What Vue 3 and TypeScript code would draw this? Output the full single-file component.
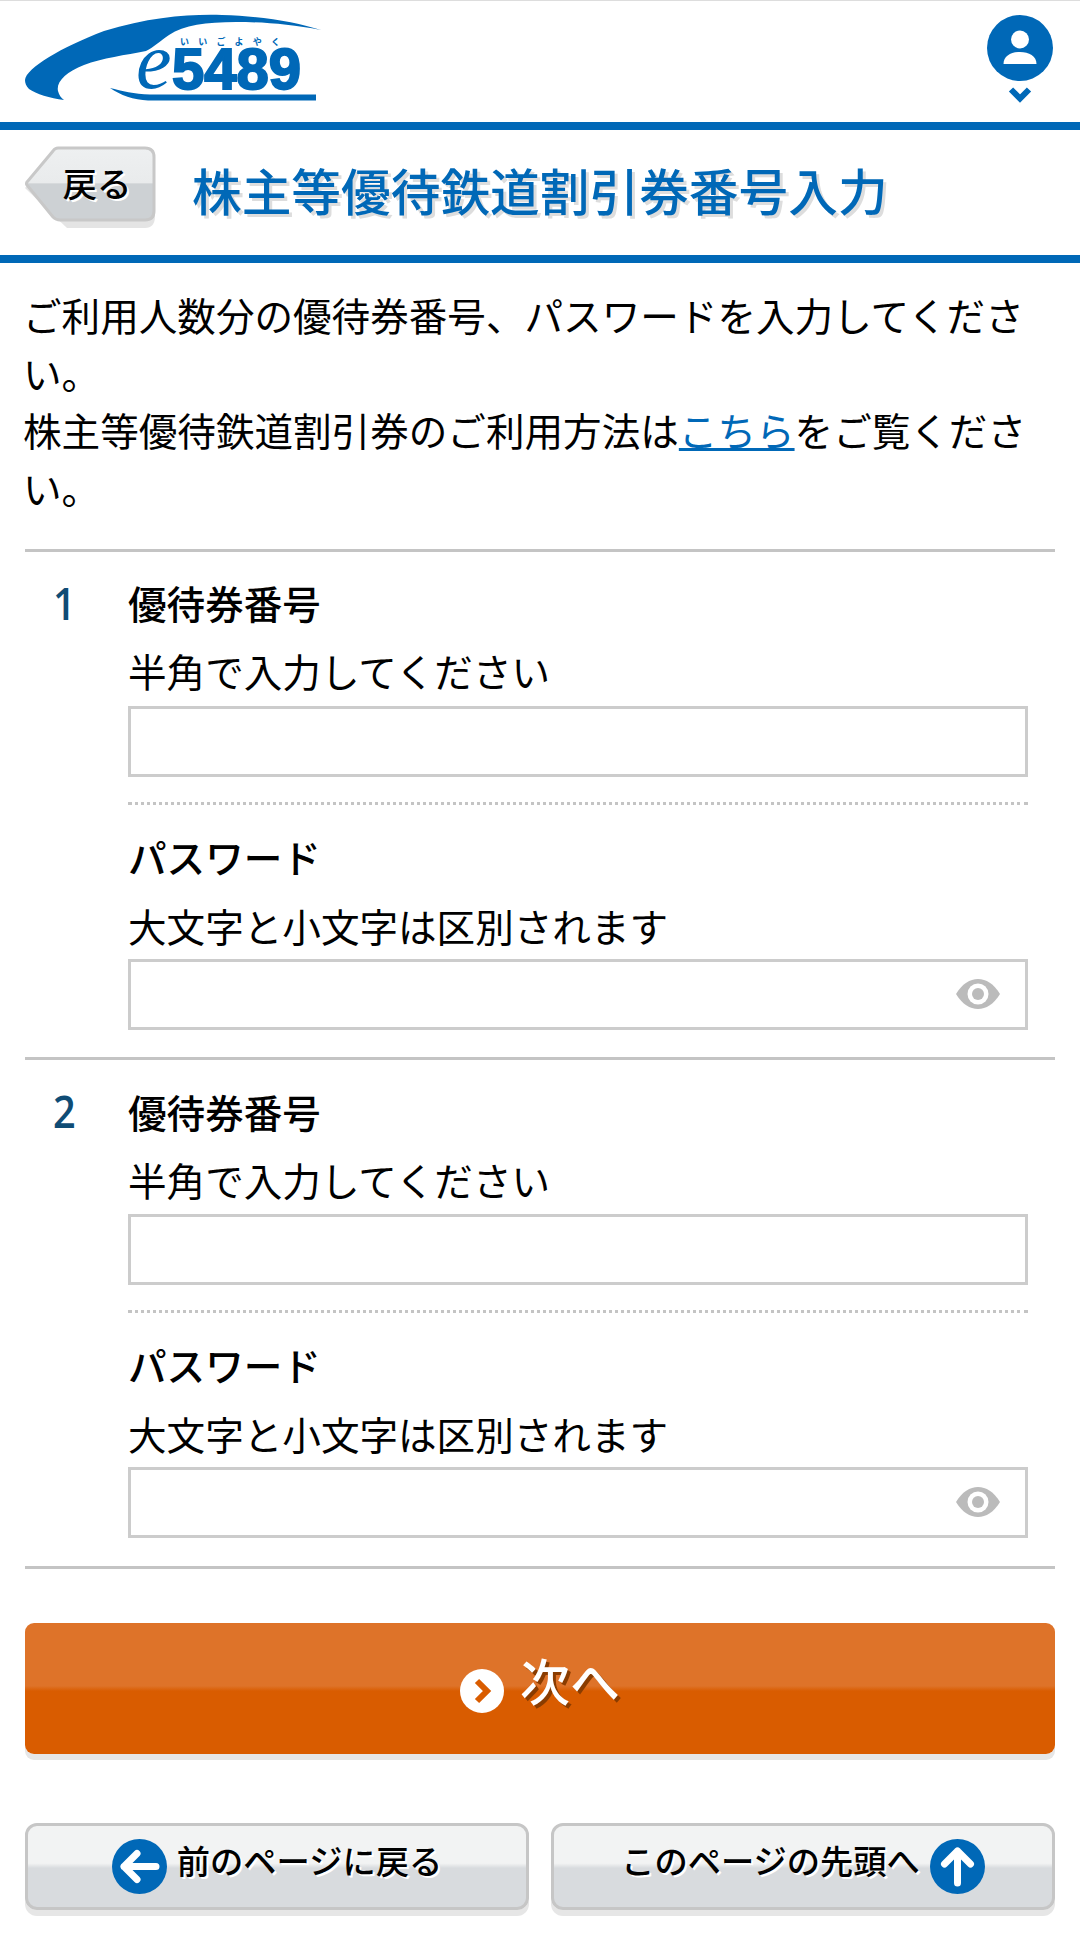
<script setup lang="ts">
interface Entry { no: number }
const entries: Entry[] = [{ no: 1 }, { no: 2 }]
</script>

<template>
  <div class="page">
    <header class="head">
      <svg class="logo" viewBox="25 12 300 92" width="300" height="92" aria-label="e5489">
        <path fill="#0068b7" d="M25 80C26 68 62 47 104 31C150 17 190 14 222 15C262 16 296 22 321 30C290 24 262 22 236 22C206 22 184 25 169 35C160 41 154 47 146 51C126 55 102 58 84 65C66 72 56 82 58 91C59 95 61 98 64 100C50 98 36 94 29 89C26 86 25 83 25 80Z" />
        <path fill="#0068b7" d="M110 88C122 91 134 94 150 94.5L316 94.5L316 100.5L148 100.5C134 100 120 95 110 88Z" />
        <text x="136" y="88" class="logo-e">e</text>
        <text x="172" y="89" class="logo-num">5489</text>
        <text x="180" y="45" class="logo-kana">いいごよやく</text>
      </svg>
      <div class="user">
        <svg viewBox="0 0 66 90" width="66" height="90">
          <circle cx="33" cy="33" r="33" fill="#0068b7" />
          <circle cx="33" cy="24.5" r="9" fill="#fff" />
          <path d="M16.5 49C16.5 41 24 37 33 37C42 37 49.5 41 49.5 49Z" fill="#fff" />
          <path d="M24 74.5L33 83.5L42 74.5" fill="none" stroke="#0068b7" stroke-width="6" />
        </svg>
      </div>
    </header>

    <div class="title-bar">
      <a class="back">
        <svg class="back-bg" viewBox="0 0 131 82" width="131" height="82">
          <defs>
            <linearGradient id="bk" x1="0" y1="0" x2="0" y2="1">
              <stop offset="0" stop-color="#eef0f1" />
              <stop offset="0.48" stop-color="#e9ebec" />
              <stop offset="0.5" stop-color="#cdd1d4" />
              <stop offset="1" stop-color="#cdd1d4" />
            </linearGradient>
          </defs>
          <path d="M32 6L120 6Q130 6 130 16L130 70Q130 82 120 82L42 82L0 42Z" fill="#e4e4e4" />
          <path d="M33 2L120 2Q129 2 129 11L129 65Q129 74 120 74L35 74Q31 74 28 71L2 39Q1 38 2 36L28 5Q30 2 33 2Z" fill="url(#bk)" stroke="#c8c8c8" stroke-width="3" />
        </svg>
        <span class="back-text">戻る</span>
      </a>
      <h1 class="title">株主等優待鉄道割引券番号入力</h1>
    </div>

    <main class="main">
      <p class="lead">
        ご利用人数分の優待券番号、パスワードを入力してください。<br />
        株主等優待鉄道割引券のご利用方法は<a class="link">こちら</a>をご覧ください。
      </p>

      <section v-for="e in entries" :key="e.no" class="entry">
        <div class="no">{{ e.no }}</div>
        <div class="fields">
          <div class="field field-top">
            <div class="label">優待券番号</div>
            <div class="hint">半角で入力してください</div>
            <input class="input" type="text" />
          </div>
          <div class="field field-bottom">
            <div class="label">パスワード</div>
            <div class="hint">大文字と小文字は区別されます</div>
            <div class="pw">
              <input class="input" type="password" />
              <svg class="eye" viewBox="0 0 44 30" width="44" height="30">
                <path fill="#bbb" d="M0 15C6 5 14 0 22 0C30 0 38 5 44 15C38 25 30 30 22 30C14 30 6 25 0 15Z" />
                <circle cx="22" cy="15" r="10.5" fill="#fff" />
                <circle cx="22" cy="15" r="6" fill="#bbb" />
              </svg>
            </div>
          </div>
        </div>
      </section>

      <button class="next" type="button">
        <svg viewBox="0 0 44 44" width="44" height="44">
          <circle cx="22" cy="22" r="22" fill="#fff" />
          <path d="M17 12L27 22L17 32" fill="none" stroke="#d95c00" stroke-width="6" />
        </svg>
        <span>次へ</span>
      </button>

      <div class="nav">
        <button class="nav-btn" type="button">
          <svg viewBox="0 0 55 55" width="55" height="55">
            <circle cx="27.5" cy="27.5" r="27.5" fill="#0068b7" />
            <path d="M44 27.5H12M25 14.5L12 27.5L25 40.5" fill="none" stroke="#fff" stroke-width="7" stroke-linecap="round" stroke-linejoin="round" />
          </svg>
          <span>前のページに戻る</span>
        </button>
        <button class="nav-btn" type="button">
          <span>このページの先頭へ</span>
          <svg viewBox="0 0 55 55" width="55" height="55">
            <circle cx="27.5" cy="27.5" r="27.5" fill="#0068b7" />
            <path d="M27.5 44V12M14.5 25L27.5 12L40.5 25" fill="none" stroke="#fff" stroke-width="7" stroke-linecap="round" stroke-linejoin="round" />
          </svg>
        </button>
      </div>
    </main>
  </div>
</template>

<style scoped>
.page {
  width: 1080px;
  min-height: 1947px;
  background: #fff;
  color: #000;
  font-family: "Noto Sans CJK JP", "Noto Sans", sans-serif;
  font-size: 38.6px;
  line-height: 57.6px;
  box-sizing: border-box;
}
.head {
  height: 122px;
  box-sizing: border-box;
  border-top: 1px solid #ddd;
  display: flex;
  justify-content: space-between;
  padding: 11px 27px 0 25px;
}
.logo { display: block; }
.logo-e { font-family: "Liberation Serif", serif; font-style: italic; font-size: 80px; fill: #0068b7; }
.logo-num { font-family: "Liberation Sans", sans-serif; font-weight: 700; font-size: 58px; fill: #0068b7; stroke: #0068b7; stroke-width: 2; letter-spacing: 0; }
.logo-kana { font-size: 9px; font-weight: 700; fill: #0068b7; letter-spacing: 9.2px; }
.user { padding-top: 3px; }
.user svg { display: block; }
.title-bar {
  height: 141px;
  box-sizing: border-box;
  border-top: 8px solid #0068b7;
  border-bottom: 8px solid #0068b7;
  display: flex;
  align-items: center;
  padding: 0 25px 11px;
  gap: 36px;
}
.back {
  position: relative;
  width: 131px;
  height: 82px;
  flex: none;
  display: flex;
  align-items: center;
  justify-content: center;
}
.back-bg { position: absolute; left: 0; top: 0; }
.back-text {
  position: relative;
  font-size: 34.5px;
  font-weight: 500;
  line-height: 1;
  padding: 0 0 10px 13px;
  text-shadow: 2px 2px 0 #fff;
}
.title {
  margin: 4px 0 0;
  font-size: 49.7px;
  line-height: 64px;
  font-weight: 500;
  color: #0068b7;
  text-shadow: 3px 3px 0 #ddd;
  white-space: nowrap;
}
.main { padding: 23px 25px 0; }
.lead { margin: 0 0 32.6px -2px; }
.link { color: #0068b7; text-decoration: underline; }
.entry {
  display: flex;
  border-top: 3px solid #c4c4c4;
}
.entry:last-of-type { border-bottom: 3px solid #c4c4c4; }
.no {
  width: 103px;
  flex: none;
  padding: 22px 0 0 28px;
  box-sizing: border-box;
  font-family: "Open Sans", sans-serif;
  font-weight: 600;
  color: #0f4c75;
  font-size: 45px;
  transform: scaleX(0.88);
  transform-origin: 28px 0;
}
.fields { flex: 1; padding-right: 27px; min-width: 0; }
.field-top { padding: 22.4px 0 25px; border-bottom: 3px dotted #c4c4c4; }
.field-bottom { padding: 23.5px 0 27.6px; }
.field-top .label { margin-bottom: 10.5px; }
.field-top .hint { margin-bottom: 5.5px; }
.field-bottom .label { margin-bottom: 11.3px; }
.field-bottom .hint { margin-bottom: 4.2px; }
.label { font-weight: 500; }
.input {
  display: block;
  width: 100%;
  height: 71px;
  box-sizing: border-box;
  border: 3px solid #ccc;
  background: #fff;
  border-radius: 0;
  outline: none;
  padding: 0 10px;
  margin: 0;
}
.pw { position: relative; }
.eye { position: absolute; right: 28px; top: 20px; }
.next {
  display: flex;
  align-items: center;
  justify-content: center;
  gap: 16px;
  width: 100%;
  height: 131px;
  margin: 54px 0 0;
  padding: 0;
  border: 0;
  border-radius: 9px;
  background: linear-gradient(#de7329 0, #de7329 48%, #d95c00 52%, #d95c00 100%);
  box-shadow: 0 6px 0 #e6e6e6;
  color: #fff;
  font-family: inherit;
  font-size: 49.92px;
  font-weight: 500;
  line-height: 1;
  text-shadow: 3px 3px 0 #8a3c00;
}
.next span { position: relative; top: -8px; }
.next svg { flex: none; position: relative; top: 3px; }
.nav {
  display: grid;
  grid-template-columns: 1fr 1fr;
  gap: 22px;
  margin-top: 69px;
}
.nav-btn {
  display: flex;
  align-items: center;
  justify-content: center;
  gap: 10px;
  height: 87px;
  padding: 0;
  border: 3px solid #c6c6c6;
  border-radius: 12px;
  background: linear-gradient(#f2f3f3 0, #f2f3f3 46%, #d8dbde 52%, #d8dbde 100%);
  box-shadow: 0 6px 0 #e6e6e6;
  color: #000;
  font-family: inherit;
  font-size: 33.28px;
  font-weight: 500;
  line-height: 1;
  text-shadow: 2px 2px 0 #fff;
}
.nav-btn svg { flex: none; }
.nav-btn span { position: relative; top: -7px; }
</style>

<style>
body { margin: 0; background: #fff; }
</style>
